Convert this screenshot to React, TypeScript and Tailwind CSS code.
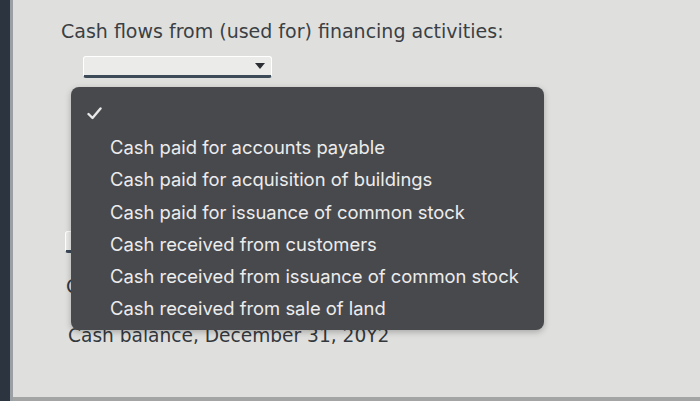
const OPTIONS = [
  "Cash paid for accounts payable",
  "Cash paid for acquisition of buildings",
  "Cash paid for issuance of common stock",
  "Cash received from customers",
  "Cash received from issuance of common stock",
  "Cash received from sale of land",
];

function Select({ width }: { width: number }) {
  return (
    <div
      className="relative h-[22px] rounded-[3px] border border-white bg-[#ebecea] border-b-[3px] border-b-[#3d4a58]"
      style={{ width }}
    >
      <span className="absolute right-[6px] top-[6px] h-0 w-0 border-x-[5px] border-t-[6px] border-x-transparent border-t-[#2c2f33]" />
    </div>
  );
}

export default function App() {
  return (
    <div className="flex h-[401px] w-[700px] overflow-hidden bg-[#dfe0de]" style={{ fontFamily: "'DejaVu Sans', Verdana, sans-serif" }}>
      {/* dark bezel strip */}
      <div className="w-[13px] shrink-0 bg-[#2c3440] border-r-[3px] border-r-[#9aa0a4]" />

      <div className="relative flex-1 flex flex-col border-b-[4px] border-b-[#a3a5a4]">
        <div className="pl-[48px] pt-[18px] text-[19px] leading-[27px] text-[#3b3f44]">
          Cash flows from (used for) financing activities:
        </div>

        <div className="pl-[70px] pt-[11px]">
          <Select width={189} />
        </div>

        {/* rows hidden under the open menu */}
        <div className="pl-[52px] pt-[153px]">
          <Select width={189} />
        </div>
        <div className="pl-[53px] pt-[21px] text-[18.6px] leading-[26px] text-[#34383d]">Cash received</div>
        <div className="pl-[55px] pt-[23px] text-[18.6px] leading-[26px] text-[#34383d]">
          Cash balance, December 31, 20Y2
        </div>

        {/* open dropdown menu */}
        <div
          className="absolute left-[58px] top-[87px] w-[473px] h-[243px] rounded-[8px] bg-[#48494d] shadow-[0_2px_6px_rgba(0,0,0,0.25)] pt-[19px]"
          style={{ fontFamily: "Inter, 'Noto Sans', sans-serif" }}
        >
          <div className="flex h-[14px] items-center pl-[16px]">
            <svg width="15" height="13" viewBox="0 0 15 13" fill="none">
              <path d="M1.5 7 L5.5 11 L13.5 1.5" stroke="#e8e8e8" strokeWidth="2.4" strokeLinecap="round" strokeLinejoin="round" />
            </svg>
          </div>
          <ul className="mt-[11px] flex flex-col">
            {OPTIONS.map((o) => (
              <li key={o} className="h-[32.3px] pl-[39px] text-[18.4px] leading-[32px] text-[#ececec]">
                {o}
              </li>
            ))}
          </ul>
        </div>
      </div>
    </div>
  );
}
